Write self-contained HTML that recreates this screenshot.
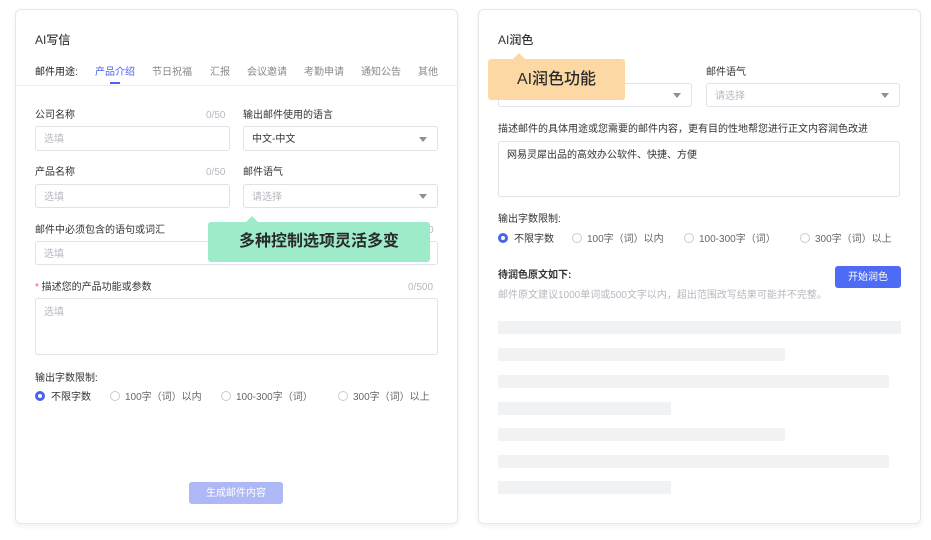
<!DOCTYPE html><html><head><meta charset="utf-8"><style>
*{margin:0;padding:0;box-sizing:border-box}
body{width:931px;height:540px;background:#fff;position:relative;overflow:hidden;font-family:"Liberation Sans","Noto Sans CJK SC",sans-serif;color:#333;font-size:10px;line-height:14px}
.a{position:absolute;white-space:nowrap;line-height:14px}
.t{margin-top:3px}
.card{position:absolute;top:9px;width:443px;height:515px;border:1px solid #e4e7ee;border-radius:6px;box-shadow:0 2px 6px rgba(0,0,0,.06);background:#fff}
.in{position:absolute;border:1px solid #dfe2e8;border-radius:3px;background:#fff;color:#b5b8bf;font-size:10px;padding:3px 8px 0;display:flex;align-items:center}
.in.ta{align-items:flex-start;padding-top:7px}
.caret{position:absolute;right:10px;top:50%;margin-top:-2px;width:0;height:0;border-left:4px solid transparent;border-right:4px solid transparent;border-top:5px solid #8a8f99}
.g{color:#b5b8bf}
.r{position:absolute;width:10px;height:10px;border:1px solid #c8ccd4;border-radius:50%}
.r.on{border:3px solid #4a63ea}
.bar{position:absolute;height:13px;background:#f1f2f4;border-radius:1px}
.btn{padding-top:2px}
</style></head><body>
<div class="card" style="left:15px"></div>
<div class="card" style="left:478px"></div>

<div class="a" style="left:35px;top:33px;font-size:12px;font-weight:500">AI写信</div>
<div class="a" style="left:35px;top:66px;font-size:10px;color:#222">邮件用途:</div>
<div class="a" style="left:95px;top:66px;color:#4a63ea">产品介绍</div>
<div class="a" style="left:152px;top:66px;color:#888">节日祝福</div>
<div class="a" style="left:210px;top:66px;color:#888">汇报</div>
<div class="a" style="left:247px;top:66px;color:#888">会议邀请</div>
<div class="a" style="left:304px;top:66px;color:#888">考勤申请</div>
<div class="a" style="left:361px;top:66px;color:#888">通知公告</div>
<div class="a" style="left:418px;top:66px;color:#888">其他</div>
<div class="a" style="left:110px;top:82px;width:10px;height:2px;background:#4a63ea"></div>
<div class="a" style="left:16px;top:85px;width:441px;height:1px;background:#eceef2"></div>

<div class="a" style="left:35px;top:109px">公司名称</div><div class="a g" style="left:206px;top:109px">0/50</div>
<div class="in" style="left:35px;top:126px;width:195px;height:25px">选填</div>
<div class="a" style="left:243px;top:109px">输出邮件使用的语言</div>
<div class="in" style="left:243px;top:126px;width:195px;height:25px;color:#333">中文-中文<div class="caret"></div></div>

<div class="a" style="left:35px;top:166px">产品名称</div><div class="a g" style="left:206px;top:166px">0/50</div>
<div class="in" style="left:35px;top:184px;width:195px;height:24px">选填</div>
<div class="a" style="left:243px;top:166px">邮件语气</div>
<div class="in" style="left:243px;top:184px;width:195px;height:24px">请选择<div class="caret"></div></div>

<div class="a" style="left:35px;top:224px">邮件中必须包含的语句或词汇</div><div class="a g" style="left:428px;top:224px">0</div>
<div class="in" style="left:35px;top:241px;width:403px;height:24px">选填</div>

<div class="a" style="left:35px;top:281px"><span style="color:#f05a5a">*</span> 描述您的产品功能或参数</div><div class="a g" style="left:408px;top:281px">0/500</div>
<div class="in ta" style="left:35px;top:298px;width:403px;height:57px">选填</div>

<div class="a" style="left:35px;top:372px">输出字数限制:</div>
<div class="r on" style="left:35px;top:391px"></div><div class="a" style="left:51px;top:391px">不限字数</div>
<div class="r" style="left:110px;top:391px"></div><div class="a" style="left:125px;top:391px;color:#666">100字（词）以内</div>
<div class="r" style="left:221px;top:391px"></div><div class="a" style="left:236px;top:391px;color:#666">100-300字（词）</div>
<div class="r" style="left:338px;top:391px"></div><div class="a" style="left:353px;top:391px;color:#666">300字（词）以上</div>

<div class="a btn" style="left:189px;top:482px;width:94px;height:22px;background:#aeb8f6;border-radius:3px;color:#fff;text-align:center;line-height:20px">生成邮件内容</div>

<div class="a" style="left:208px;top:222px;width:222px;height:40px;background:#9debc9;border-radius:3px;font-size:16px;font-weight:bold;color:#2a2a2a;text-align:center;line-height:40px">多种控制选项灵活多变</div>
<div class="a" style="left:246px;top:216px;width:0;height:0;border-left:6px solid transparent;border-right:6px solid transparent;border-bottom:6px solid #9debc9"></div>

<!-- right -->
<div class="a" style="left:498px;top:33px;font-size:12px;font-weight:500">AI润色</div>
<div class="in" style="left:498px;top:83px;width:194px;height:24px"><div class="caret"></div></div>
<div class="a" style="left:706px;top:66px">邮件语气</div>
<div class="in" style="left:706px;top:83px;width:194px;height:24px">请选择<div class="caret"></div></div>
<div class="a" style="left:488px;top:59px;width:137px;height:41px;background:#fcd9a4;border-radius:3px;font-size:16px;color:#2a2a2a;text-align:center;line-height:41px;font-weight:500">AI润色功能</div>
<div class="a" style="left:513px;top:53px;width:0;height:0;border-left:6px solid transparent;border-right:6px solid transparent;border-bottom:6px solid #fcd9a4"></div>

<div class="a" style="left:498px;top:123px">描述邮件的具体用途或您需要的邮件内容，更有目的性地帮您进行正文内容润色改进</div>
<div class="in ta" style="left:498px;top:141px;width:402px;height:56px;color:#333">网易灵犀出品的高效办公软件、快捷、方便</div>

<div class="a" style="left:498px;top:213px">输出字数限制:</div>
<div class="r on" style="left:498px;top:233px"></div><div class="a" style="left:514px;top:233px">不限字数</div>
<div class="r" style="left:572px;top:233px"></div><div class="a" style="left:587px;top:233px;color:#666">100字（词）以内</div>
<div class="r" style="left:684px;top:233px"></div><div class="a" style="left:699px;top:233px;color:#666">100-300字（词）</div>
<div class="r" style="left:800px;top:233px"></div><div class="a" style="left:815px;top:233px;color:#666">300字（词）以上</div>

<div class="a" style="left:498px;top:269px;font-weight:bold">待润色原文如下:</div>
<div class="a btn" style="left:835px;top:266px;width:66px;height:22px;background:#4d6bf5;border-radius:3px;color:#fff;text-align:center;line-height:20px">开始润色</div>
<div class="a g" style="left:498px;top:289px">邮件原文建议1000单词或500文字以内，超出范围改写结果可能并不完整。</div>

<div class="bar" style="left:498px;top:321px;width:403px"></div>
<div class="bar" style="left:498px;top:348px;width:287px"></div>
<div class="bar" style="left:498px;top:375px;width:391px"></div>
<div class="bar" style="left:498px;top:402px;width:173px"></div>
<div class="bar" style="left:498px;top:428px;width:287px"></div>
<div class="bar" style="left:498px;top:455px;width:391px"></div>
<div class="bar" style="left:498px;top:481px;width:173px"></div>
</body></html>
